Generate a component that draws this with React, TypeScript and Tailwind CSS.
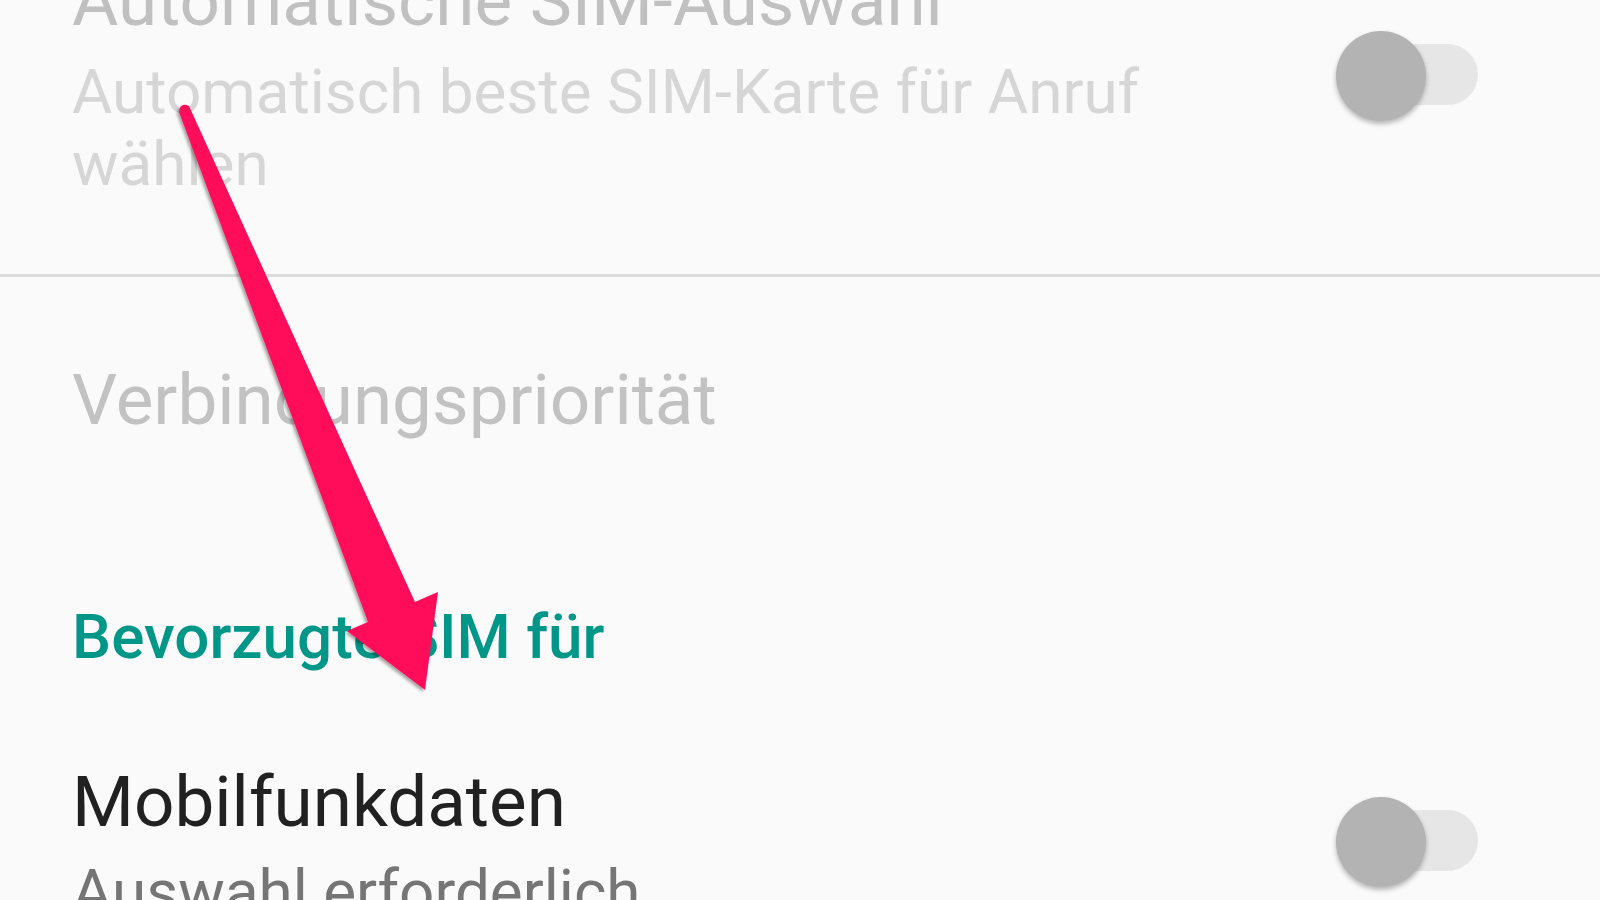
function Toggle() {
  return (
    <div className="relative h-[90px] w-[142px] shrink-0">
      <div className="absolute left-[14px] right-0 top-[13px] h-[61px] rounded-full bg-[#e6e6e6]" />
      <div className="absolute left-0 top-0 size-[90px] rounded-full bg-[#b3b3b3] shadow-[0_3px_5px_rgba(0,0,0,0.28)]" />
    </div>
  );
}

function Arrow() {
  return (
    <svg
      className="pointer-events-none absolute left-0 top-0"
      width="1600"
      height="900"
      viewBox="0 0 1600 900"
    >
      <defs>
        <filter id="arrowShadow" x="-20%" y="-20%" width="140%" height="140%">
          <feDropShadow dx="-2" dy="2" stdDeviation="1.5" floodColor="#000" floodOpacity="0.35" />
        </filter>
      </defs>
      <path
        d="M179 112 Q180 102 189 106 L415 602 L438 592 L425 690 L347 631 L368 622 Z"
        fill="#ff0e5a"
        filter="url(#arrowShadow)"
      />
    </svg>
  );
}

export default function App() {
  return (
    <div className="relative h-[900px] w-full overflow-hidden bg-[#fafafa] font-['Roboto',sans-serif]">
      <div className="flex flex-col">
        {/* Automatische SIM-Auswahl (disabled) */}
        <div className="mt-[-41px] flex items-center pb-[74px] pl-[72px] pr-[122px]">
          <div className="min-w-0 flex-1">
            <p className="whitespace-nowrap text-[71px] leading-[83px] text-[#c0c0c0]">
              Automatische SIM-Auswahl
            </p>
            <p className="mt-[14px] max-w-[1180px] text-[62px] leading-[72px] text-[#d6d6d6]">
              Automatisch beste SIM-Karte für Anruf wählen
            </p>
          </div>
          <div className="mb-[8px]">
            <Toggle />
          </div>
        </div>

        <div className="h-[3px] w-full bg-[#dcdcdc]" />

        {/* Verbindungspriorität (disabled) */}
        <div className="pl-[72px] pt-[81px]">
          <p className="text-[71px] leading-[83px] text-[#c2c2c2]">Verbindungspriorität</p>
        </div>

        {/* Category */}
        <div className="mt-[160px] pl-[72px]">
          <p className="text-[62px] font-medium leading-[72px] text-[#009688]">Bevorzugte SIM für</p>
        </div>

        {/* Mobilfunkdaten */}
        <div className="mt-[87px] flex items-center pl-[72px] pr-[122px]">
          <div className="min-w-0 flex-1">
            <p className="text-[71px] leading-[83px] text-[#212121]">Mobilfunkdaten</p>
            <p className="mt-[13px] text-[62px] leading-[72px] text-[#757575]">Auswahl erforderlich</p>
          </div>
          <div className="mb-[4px]">
            <Toggle />
          </div>
        </div>
      </div>

      <Arrow />
    </div>
  );
}
